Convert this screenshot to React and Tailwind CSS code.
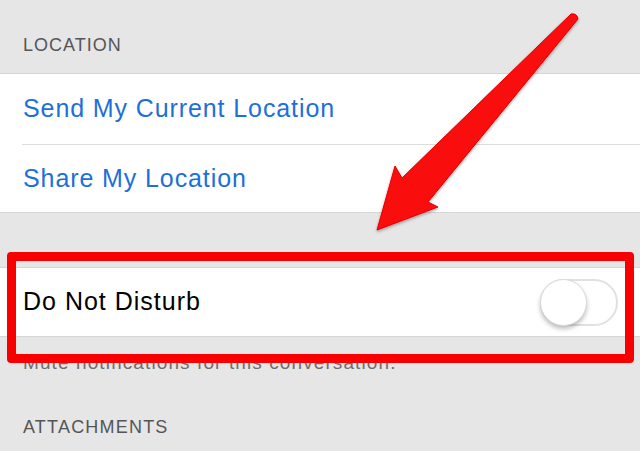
import React from 'react';

// iOS-style conversation details, with a red annotation arrow and box on top
function Toggle() {
  return (
    <div className="relative w-[78px] h-[47px] rounded-full border-2 border-[#e1e1e1] bg-white">
      <div className="absolute -left-[2px] -top-[2px] w-[47px] h-[47px] rounded-full bg-white border border-[#dadada] shadow-[0_3px_4px_rgba(0,0,0,0.25)]" />
    </div>
  );
}

function Arrow() {
  return (
    <svg className="absolute left-0 top-0 pointer-events-none" width="640" height="451" viewBox="0 0 640 451">
      <defs>
        <filter id="sh" x="-20%" y="-20%" width="140%" height="140%">
          <feDropShadow dx="0" dy="1.5" stdDeviation="1.5" floodColor="#000" floodOpacity="0.35" />
        </filter>
      </defs>
      <path
        d="M571 14 Q577 13 578 19 L428 202 L438 207 L377 230 L395 166 L402 178 Z"
        fill="#fa0a0a"
        stroke="#e60000"
        strokeWidth="1"
        strokeLinejoin="round"
        filter="url(#sh)"
      />
    </svg>
  );
}

export default function App() {
  return (
    <div className="relative w-[640px] h-[451px] overflow-hidden bg-[#e6e6e6] font-['Liberation_Sans','Helvetica_Neue',Arial,sans-serif]">
      <div className="h-[73px] flex items-end pb-[14px] pl-[23px] text-[18px] text-[#555558] tracking-[1px]">
        LOCATION
      </div>

      <div className="bg-white border-y border-[#d6d6d6]">
        <div className="h-[70px] flex items-center pl-[23px] text-[25px] text-[#1e6fd9] tracking-[0.9px]">
          Send My Current Location
        </div>
        <div className="ml-[22px] border-t border-[#dcdcdc]" />
        <div className="h-[67px] flex items-center pl-[23px] text-[25px] text-[#1e6fd9] tracking-[0.9px]">
          Share My Location
        </div>
      </div>

      <div className="h-[54px]" />

      <div className="bg-white border-y border-[#d6d6d6] h-[70px] flex items-center justify-between pl-[23px] pr-[22px]">
        <span className="text-[25px] text-black tracking-[1px]">Do Not Disturb</span>
        <Toggle />
      </div>

      <div className="pl-[23px] pt-[16px] text-[19px] text-[#6d6d6d] tracking-[1.1px] leading-none">
        Mute notifications for this conversation.
      </div>

      <div className="pl-[23px] pt-[46px] text-[18px] text-[#555558] tracking-[1.2px] leading-none">
        ATTACHMENTS
      </div>

      {/* annotation box */}
      <div className="absolute left-[7px] top-[252px] w-[627px] h-[111px] border-[9px] border-[#f80000] rounded-[4px]" />
      <Arrow />
    </div>
  );
}
